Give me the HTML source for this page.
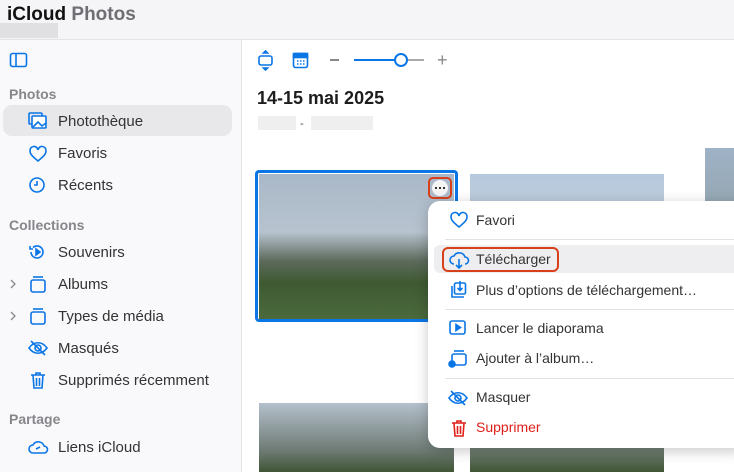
<!DOCTYPE html>
<html><head><meta charset="utf-8"><style>
*{margin:0;padding:0;box-sizing:border-box}
body{width:734px;height:472px;overflow:hidden;background:#fff;font-family:"Liberation Sans",sans-serif;position:relative;color:#1d1d1f}
.a{position:absolute}
.t{font-size:15px;color:#333;white-space:nowrap}
.h{font-size:14px;color:#86868b;font-weight:bold}
svg{position:absolute;fill:none;stroke:#0a76e6;stroke-width:1.6}
.m{font-size:14px;color:#333;white-space:nowrap}
</style></head><body>
<div class="a" style="left:0;top:0;width:734px;height:40px;background:#f5f5f7;border-bottom:1px solid #e3e3e6"></div>
<div class="a" style="left:7px;top:4px;font-size:19px;font-weight:bold;color:#111">iCloud <span style="color:#6e6e73">Photos</span></div>
<div class="a" style="left:0;top:23px;width:58px;height:15px;background:#e0e0e3"></div>
<div class="a" style="left:0;top:40px;width:242px;height:432px;background:#f9f9fb;border-right:1px solid #e3e3e6"></div>
<svg style="left:9px;top:52px" width="20" height="16"><rect x="1.5" y="1.5" width="16" height="13" rx="2"/><line x1="7" y1="2" x2="7" y2="14"/></svg>
<div class="a h" style="left:9px;top:86px">Photos</div>
<div class="a" style="left:3px;top:105px;width:229px;height:31px;background:#e8e8ea;border-radius:9px"></div>
<svg style="left:28px;top:112px" width="20" height="18"><rect x="1" y="1" width="13" height="11" rx="1"/><rect x="4" y="4" width="14" height="12" rx="1" fill="#fff"/><path d="M5 15l5-5 4 4 4-3" /></svg>
<div class="a t" style="left:58px;top:113px">Photothèque</div>
<svg style="left:28px;top:145px" width="20" height="18"><path d="M10 16C4 11 2 9 2 6a4 4 0 0 1 8-1 4 4 0 0 1 8 1c0 3-2 5-8 10z"/></svg>
<div class="a t" style="left:58px;top:145px">Favoris</div>
<svg style="left:28px;top:176px" width="20" height="18"><circle cx="9" cy="9" r="7"/><path d="M9 5v4H6"/></svg>
<div class="a t" style="left:58px;top:177px">Récents</div>
<div class="a h" style="left:9px;top:217px">Collections</div>
<svg style="left:28px;top:243px" width="20" height="18"><path d="M3 9a6 6 0 1 0 2-4.5"/><path d="M2 3v3h3"/><path d="M8 6l4 3-4 3z" fill="#0a76e6"/></svg>
<div class="a t" style="left:58px;top:244px">Souvenirs</div>
<svg style="left:8px;top:278px;stroke:#888;stroke-width:1.3" width="10" height="12"><path d="M3 2l4 4-4 4"/></svg>
<svg style="left:28px;top:274px" width="20" height="20"><rect x="3" y="6" width="14" height="12" rx="2"/><line x1="5" y1="3" x2="15" y2="3"/></svg>
<div class="a t" style="left:58px;top:276px">Albums</div>
<svg style="left:8px;top:310px;stroke:#888;stroke-width:1.3" width="10" height="12"><path d="M3 2l4 4-4 4"/></svg>
<svg style="left:28px;top:306px" width="20" height="20"><rect x="3" y="6" width="14" height="12" rx="2"/><line x1="5" y1="3" x2="15" y2="3"/></svg>
<div class="a t" style="left:58px;top:308px">Types de média</div>
<svg style="left:27px;top:339px" width="22" height="18"><path d="M2 9c5-7 13-7 18 0-5 7-13 7-18 0z"/><circle cx="11" cy="9" r="3"/><line x1="4" y1="2" x2="18" y2="16"/></svg>
<div class="a t" style="left:58px;top:340px">Masqués</div>
<svg style="left:28px;top:370px" width="20" height="20"><path d="M3 5h14M8 5V3h4v2M5 5l1 13h8l1-13M8.5 8v8M11.5 8v8"/></svg>
<div class="a t" style="left:58px;top:372px">Supprimés récemment</div>
<div class="a h" style="left:9px;top:411px">Partage</div>
<svg style="left:27px;top:438px" width="22" height="18"><path d="M6 15a4 4 0 0 1 0-8 6 6 0 0 1 11 1 3.5 3.5 0 0 1 0 7z"/><path d="M9 11l4-2"/></svg>
<div class="a t" style="left:58px;top:439px">Liens iCloud</div>

<svg style="left:257px;top:50px" width="18" height="22"><rect x="2" y="6" width="13" height="9" rx="2"/><path d="M8.5 1l-2 2h4zM8.5 20l-2-2h4z" fill="#0a76e6"/></svg>
<svg style="left:292px;top:52px" width="18" height="18"><rect x="1.5" y="1.5" width="14" height="14" rx="2"/><rect x="1.5" y="1.5" width="14" height="4" fill="#0a76e6"/><path d="M5 9h8M5 12h8" stroke-dasharray="1.5 1.5"/></svg>
<div class="a" style="left:330px;top:59px;width:9px;height:1.5px;background:#888"></div>
<div class="a" style="left:354px;top:59px;width:48px;height:2px;background:#0a76e6"></div>
<div class="a" style="left:402px;top:59px;width:22px;height:2px;background:#aaa"></div>
<div class="a" style="left:394px;top:53px;width:14px;height:14px;border-radius:50%;border:2px solid #0a76e6;background:#fff"></div>
<div class="a" style="left:437px;top:50px;color:#888;font-size:18px">+</div>
<div class="a" style="left:257px;top:88px;font-size:18px;font-weight:bold;color:#1d1d1f">14-15 mai 2025</div>
<div class="a" style="left:258px;top:116px;width:38px;height:14px;background:#efefef"></div>
<div class="a" style="left:300px;top:118px;font-size:11px;color:#444">-</div>
<div class="a" style="left:311px;top:116px;width:62px;height:14px;background:#efefef"></div>

<div class="a" style="left:255px;top:170px;width:203px;height:152px;border:3px solid #0a76e6;border-radius:4px"></div>
<div class="a" style="left:259px;top:174px;width:195px;height:145px;background:linear-gradient(180deg,#a9b8c8 0%,#b7c3cf 40%,#5d6a5c 60%,#3f5a32 75%,#4a6a3c 100%)"></div>
<div class="a" style="left:470px;top:174px;width:194px;height:150px;background:linear-gradient(180deg,#b6c8dc 0%,#c3d0dc 40%,#5b6d55 70%,#3e5530 100%)"></div>
<div class="a" style="left:705px;top:148px;width:29px;height:180px;background:linear-gradient(180deg,#9fb2c6,#7f8f88)"></div>
<div class="a" style="left:259px;top:403px;width:195px;height:69px;background:linear-gradient(180deg,#b4c0cc,#6d7a72 70%,#3f5535)"></div>
<div class="a" style="left:470px;top:403px;width:194px;height:69px;background:linear-gradient(180deg,#b8c6d4,#6e7c70 70%,#3e5533)"></div>
<div class="a" style="left:428px;top:177px;width:24px;height:22px;border:2px solid #d8401c;border-radius:5px"></div>
<div class="a" style="left:432px;top:180px;width:16px;height:16px;border-radius:50%;background:#f4f4f4"></div>
<div class="a" style="left:435px;top:187px;width:2px;height:2px;background:#333;box-shadow:4px 0 #333,8px 0 #333"></div>

<div class="a" style="left:428px;top:201px;width:320px;height:247px;background:#fff;border-radius:12px;box-shadow:0 3px 14px rgba(0,0,0,.22)"></div>
<svg style="left:449px;top:211px" width="20" height="18"><path d="M10 16C4 11 2 9 2 6a4 4 0 0 1 8-1 4 4 0 0 1 8 1c0 3-2 5-8 10z"/></svg>
<div class="a m" style="left:476px;top:212px">Favori</div>
<div class="a" style="left:445px;top:239px;width:289px;height:1px;background:#e2e2e2"></div>
<div class="a" style="left:434px;top:245px;width:300px;height:28px;background:#eeeef0;border-radius:6px 0 0 6px"></div>
<div class="a" style="left:442px;top:247px;width:117px;height:25px;border:2px solid #d8401c;border-radius:6px"></div>
<svg style="left:448px;top:250px" width="22" height="20"><path d="M6 14a4 4 0 0 1 0-8 6 6 0 0 1 11 1 3.5 3.5 0 0 1 0 7"/><path d="M11 9v9M8 15l3 3 3-3"/></svg>
<div class="a m" style="left:476px;top:251px">Télécharger</div>
<svg style="left:448px;top:280px" width="20" height="20"><path d="M4 6v11h12"/><rect x="6.5" y="3" width="11" height="11" rx="1.5"/><path d="M12 1v9M9.5 8l2.5 2.5 2.5-2.5"/></svg>
<div class="a m" style="left:476px;top:282px">Plus d’options de téléchargement…</div>
<div class="a" style="left:445px;top:309px;width:289px;height:1px;background:#e2e2e2"></div>
<svg style="left:448px;top:319px" width="20" height="18"><rect x="2" y="2" width="15" height="13" rx="2"/><path d="M8 5.5l4.5 3-4.5 3z" fill="#0a76e6"/></svg>
<div class="a m" style="left:476px;top:320px">Lancer le diaporama</div>
<svg style="left:448px;top:348px" width="20" height="20"><rect x="4" y="6" width="14" height="11" rx="2"/><path d="M6 3h10"/><circle cx="4" cy="16" r="3" fill="#0a76e6"/></svg>
<div class="a m" style="left:476px;top:350px">Ajouter à l’album…</div>
<div class="a" style="left:445px;top:378px;width:289px;height:1px;background:#e2e2e2"></div>
<svg style="left:447px;top:389px" width="22" height="18"><path d="M2 9c5-7 13-7 18 0-5 7-13 7-18 0z"/><circle cx="11" cy="9" r="3"/><line x1="4" y1="2" x2="18" y2="16"/></svg>
<div class="a m" style="left:476px;top:389px">Masquer</div>
<svg style="left:449px;top:418px;stroke:#e0201a" width="20" height="20"><path d="M3 5h14M8 5V3h4v2M5 5l1 13h8l1-13M8.5 8v8M11.5 8v8"/></svg>
<div class="a m" style="left:476px;top:419px;color:#e0201a">Supprimer</div>
</body></html>
